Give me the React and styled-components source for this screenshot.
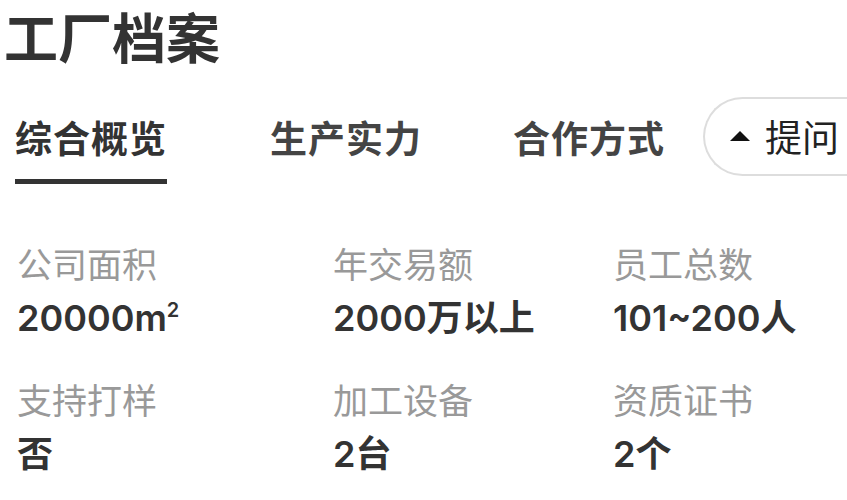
import styled, { createGlobalStyle } from "styled-components";

const Global = createGlobalStyle`
  html, body {
    margin: 0;
    padding: 0;
    background: #ffffff;
  }
  body {
    font-family: Inter, "Noto Sans CJK SC", sans-serif;
    color: #333333;
  }
`;

const Page = styled.div`
  width: 847px;
  height: 500px;
  overflow: hidden;
  box-sizing: border-box;
`;

const Title = styled.h1`
  margin: 0;
  padding: 8px 0 0 4px;
  font-size: 54px;
  line-height: 64px;
  font-weight: 700;
  color: #333333;
`;

const TabBar = styled.div`
  display: flex;
  align-items: center;
  margin-top: 28px;
  padding-left: 15px;
  height: 80px;
`;

const Tab = styled.div`
  position: relative;
  font-size: 37px;
  letter-spacing: 1px;
  line-height: 80px;
  font-weight: 700;
  color: ${(p) => (p.active ? "#333333" : "#444444")};
  margin-right: ${(p) => p.gap}px;
  white-space: nowrap;

  &::after {
    content: "";
    display: ${(p) => (p.active ? "block" : "none")};
    position: absolute;
    left: 0;
    right: 0;
    bottom: -4px;
    height: 5px;
    background: #333333;
  }
`;

const AskButton = styled.div`
  display: flex;
  align-items: center;
  gap: 15px;
  flex-shrink: 0;
  height: 79px;
  width: 200px;
  margin-bottom: 8px;
  box-sizing: border-box;
  padding-left: 25px;
  border: 2px solid #dddddd;
  border-right: none;
  border-radius: 40px 0 0 40px;
  font-size: 37px;
  color: #222222;
`;

const Caret = styled.span`
  width: 0;
  height: 0;
  border-left: 10px solid transparent;
  border-right: 10px solid transparent;
  border-bottom: 10px solid #111111;
`;

const Grid = styled.div`
  display: grid;
  grid-template-columns: 316px 280px 1fr;
  row-gap: 37px;
  padding: 62px 0 0 17px;
`;

const Cell = styled.div`
  display: flex;
  flex-direction: column;
  gap: 7px;
`;

const Label = styled.div`
  font-size: 35px;
  line-height: 46px;
  color: #999999;
`;

const Value = styled.div`
  font-size: 36px;
  line-height: 46px;
  font-weight: 600;
  color: #333333;

  sup {
    font-size: 20px;
    vertical-align: 14px;
    line-height: 0;
  }
`;

const stats = [
  { label: "公司面积", value: <>20000m<sup>2</sup></> },
  { label: "年交易额", value: "2000万以上" },
  { label: "员工总数", value: "101~200人" },
  { label: "支持打样", value: "否" },
  { label: "加工设备", value: "2台" },
  { label: "资质证书", value: "2个" },
];

export default function App() {
  return (
    <Page>
      <Global />
      <Title>工厂档案</Title>
      <TabBar>
        <Tab active gap={103}>综合概览</Tab>
        <Tab gap={91}>生产实力</Tab>
        <Tab gap={38}>合作方式</Tab>
        <AskButton>
          <Caret />
          提问
        </AskButton>
      </TabBar>
      <Grid>
        {stats.map((s) => (
          <Cell key={s.label}>
            <Label>{s.label}</Label>
            <Value>{s.value}</Value>
          </Cell>
        ))}
      </Grid>
    </Page>
  );
}
